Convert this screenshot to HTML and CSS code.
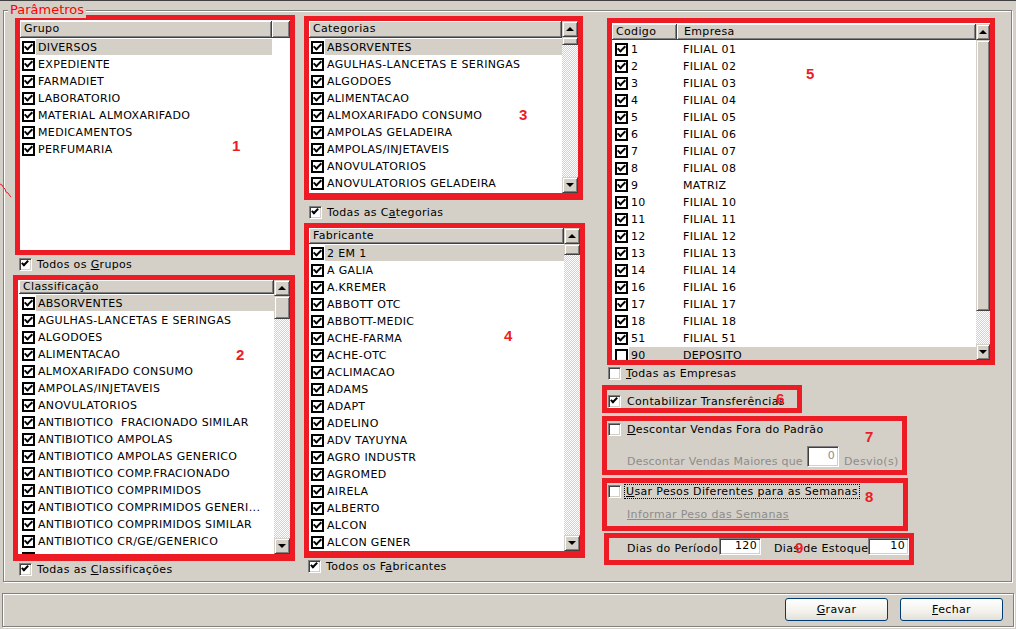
FILE: index.html
```html
<!DOCTYPE html>
<html lang="pt">
<head>
<meta charset="utf-8">
<title>Parâmetros</title>
<link rel="stylesheet" href="styles.css">
</head>
<body>
<div class="window">
  <div class="groupbox">
    <span class="legend">Parâmetros</span>
    <div class="cols">
      <div class="col col1">
        <div class="anno box1">
          <div class="lv">
            <div class="lv-main">
              <div class="lv-head"><div class="hd hd-grupo">Grupo</div><div class="hd fill"></div></div>
              <div class="rows">
                <div class="row sel"><i class="lcb on"></i><span class="txt">DIVERSOS</span></div>
                <div class="row"><i class="lcb on"></i><span class="txt">EXPEDIENTE</span></div>
                <div class="row"><i class="lcb on"></i><span class="txt">FARMADIET</span></div>
                <div class="row"><i class="lcb on"></i><span class="txt">LABORATORIO</span></div>
                <div class="row"><i class="lcb on"></i><span class="txt">MATERIAL ALMOXARIFADO</span></div>
                <div class="row"><i class="lcb on"></i><span class="txt">MEDICAMENTOS</span></div>
                <div class="row"><i class="lcb on"></i><span class="txt">PERFUMARIA</span></div>
              </div>
            </div>
          </div>
        </div>
        <div class="opt opt-grupos"><i class="cb on"></i><span class="lbl">Todos os <u>G</u>rupos</span></div>
        <div class="anno box2">
          <div class="lv">
            <div class="lv-main">
              <div class="lv-head"><div class="hd fill">Classificação</div></div>
              <div class="rows">
                <div class="row sel"><i class="lcb on"></i><span class="txt">ABSORVENTES</span></div>
                <div class="row"><i class="lcb on"></i><span class="txt">AGULHAS-LANCETAS E SERINGAS</span></div>
                <div class="row"><i class="lcb on"></i><span class="txt">ALGODOES</span></div>
                <div class="row"><i class="lcb on"></i><span class="txt">ALIMENTACAO</span></div>
                <div class="row"><i class="lcb on"></i><span class="txt">ALMOXARIFADO CONSUMO</span></div>
                <div class="row"><i class="lcb on"></i><span class="txt">AMPOLAS/INJETAVEIS</span></div>
                <div class="row"><i class="lcb on"></i><span class="txt">ANOVULATORIOS</span></div>
                <div class="row"><i class="lcb on"></i><span class="txt">ANTIBIOTICO  FRACIONADO SIMILAR</span></div>
                <div class="row"><i class="lcb on"></i><span class="txt">ANTIBIOTICO AMPOLAS</span></div>
                <div class="row"><i class="lcb on"></i><span class="txt">ANTIBIOTICO AMPOLAS GENERICO</span></div>
                <div class="row"><i class="lcb on"></i><span class="txt">ANTIBIOTICO COMP.FRACIONADO</span></div>
                <div class="row"><i class="lcb on"></i><span class="txt">ANTIBIOTICO COMPRIMIDOS</span></div>
                <div class="row"><i class="lcb on"></i><span class="txt">ANTIBIOTICO COMPRIMIDOS GENERI...</span></div>
                <div class="row"><i class="lcb on"></i><span class="txt">ANTIBIOTICO COMPRIMIDOS SIMILAR</span></div>
                <div class="row"><i class="lcb on"></i><span class="txt">ANTIBIOTICO CR/GE/GENERICO</span></div>
                <div class="row"><i class="lcb on"></i><span class="txt">ANTIBIOTICO CR/GE/SIMILAR</span></div>
              </div>
            </div>
            <div class="sb">
              <div class="sbb up"></div>
              <div class="thumb th2"></div>
              <div class="track"></div>
              <div class="sbb dn"></div>
            </div>
          </div>
        </div>
        <div class="opt opt-class"><i class="cb on"></i><span class="lbl">Todas as <u>C</u>lassificações</span></div>
      </div>

      <div class="col col2">
        <div class="anno box3">
          <div class="lv">
            <div class="lv-main">
              <div class="lv-head"><div class="hd fill">Categorias</div></div>
              <div class="rows">
                <div class="row sel"><i class="lcb on"></i><span class="txt">ABSORVENTES</span></div>
                <div class="row"><i class="lcb on"></i><span class="txt">AGULHAS-LANCETAS E SERINGAS</span></div>
                <div class="row"><i class="lcb on"></i><span class="txt">ALGODOES</span></div>
                <div class="row"><i class="lcb on"></i><span class="txt">ALIMENTACAO</span></div>
                <div class="row"><i class="lcb on"></i><span class="txt">ALMOXARIFADO CONSUMO</span></div>
                <div class="row"><i class="lcb on"></i><span class="txt">AMPOLAS GELADEIRA</span></div>
                <div class="row"><i class="lcb on"></i><span class="txt">AMPOLAS/INJETAVEIS</span></div>
                <div class="row"><i class="lcb on"></i><span class="txt">ANOVULATORIOS</span></div>
                <div class="row"><i class="lcb on"></i><span class="txt">ANOVULATORIOS GELADEIRA</span></div>
                <div class="row"><i class="lcb on"></i><span class="txt">ANSIOLITICOS</span></div>
              </div>
            </div>
            <div class="sb">
              <div class="sbb up"></div>
              <div class="thumb th3"></div>
              <div class="track"></div>
              <div class="sbb dn"></div>
            </div>
          </div>
        </div>
        <div class="opt opt-cat"><i class="cb on"></i><span class="lbl">Todas as C<u>a</u>tegorias</span></div>
        <div class="anno box4">
          <div class="lv">
            <div class="lv-main">
              <div class="lv-head"><div class="hd fill">Fabricante</div></div>
              <div class="rows">
                <div class="row sel"><i class="lcb on"></i><span class="txt">2 EM 1</span></div>
                <div class="row"><i class="lcb on"></i><span class="txt">A GALIA</span></div>
                <div class="row"><i class="lcb on"></i><span class="txt">A.KREMER</span></div>
                <div class="row"><i class="lcb on"></i><span class="txt">ABBOTT OTC</span></div>
                <div class="row"><i class="lcb on"></i><span class="txt">ABBOTT-MEDIC</span></div>
                <div class="row"><i class="lcb on"></i><span class="txt">ACHE-FARMA</span></div>
                <div class="row"><i class="lcb on"></i><span class="txt">ACHE-OTC</span></div>
                <div class="row"><i class="lcb on"></i><span class="txt">ACLIMACAO</span></div>
                <div class="row"><i class="lcb on"></i><span class="txt">ADAMS</span></div>
                <div class="row"><i class="lcb on"></i><span class="txt">ADAPT</span></div>
                <div class="row"><i class="lcb on"></i><span class="txt">ADELINO</span></div>
                <div class="row"><i class="lcb on"></i><span class="txt">ADV TAYUYNA</span></div>
                <div class="row"><i class="lcb on"></i><span class="txt">AGRO INDUSTR</span></div>
                <div class="row"><i class="lcb on"></i><span class="txt">AGROMED</span></div>
                <div class="row"><i class="lcb on"></i><span class="txt">AIRELA</span></div>
                <div class="row"><i class="lcb on"></i><span class="txt">ALBERTO</span></div>
                <div class="row"><i class="lcb on"></i><span class="txt">ALCON</span></div>
                <div class="row"><i class="lcb on"></i><span class="txt">ALCON GENER</span></div>
                <div class="row"><i class="lcb on"></i><span class="txt">ALERGAN</span></div>
              </div>
            </div>
            <div class="sb">
              <div class="sbb up"></div>
              <div class="thumb th4"></div>
              <div class="track"></div>
              <div class="sbb dn"></div>
            </div>
          </div>
        </div>
        <div class="opt opt-fab"><i class="cb on"></i><span class="lbl">Todos os F<u>a</u>bricantes</span></div>
      </div>

      <div class="col col3">
        <div class="anno box5">
          <div class="lv">
            <div class="lv-main">
              <div class="lv-head"><div class="hd hd-cod">Codigo</div><div class="hd fill hd-emp">Empresa</div></div>
              <div class="rows">
                <div class="row"><i class="lcb on"></i><span class="txt"><span class="code">1</span>FILIAL 01</span></div>
                <div class="row"><i class="lcb on"></i><span class="txt"><span class="code">2</span>FILIAL 02</span></div>
                <div class="row"><i class="lcb on"></i><span class="txt"><span class="code">3</span>FILIAL 03</span></div>
                <div class="row"><i class="lcb on"></i><span class="txt"><span class="code">4</span>FILIAL 04</span></div>
                <div class="row"><i class="lcb on"></i><span class="txt"><span class="code">5</span>FILIAL 05</span></div>
                <div class="row"><i class="lcb on"></i><span class="txt"><span class="code">6</span>FILIAL 06</span></div>
                <div class="row"><i class="lcb on"></i><span class="txt"><span class="code">7</span>FILIAL 07</span></div>
                <div class="row"><i class="lcb on"></i><span class="txt"><span class="code">8</span>FILIAL 08</span></div>
                <div class="row"><i class="lcb on"></i><span class="txt"><span class="code">9</span>MATRIZ</span></div>
                <div class="row"><i class="lcb on"></i><span class="txt"><span class="code">10</span>FILIAL 10</span></div>
                <div class="row"><i class="lcb on"></i><span class="txt"><span class="code">11</span>FILIAL 11</span></div>
                <div class="row"><i class="lcb on"></i><span class="txt"><span class="code">12</span>FILIAL 12</span></div>
                <div class="row"><i class="lcb on"></i><span class="txt"><span class="code">13</span>FILIAL 13</span></div>
                <div class="row"><i class="lcb on"></i><span class="txt"><span class="code">14</span>FILIAL 14</span></div>
                <div class="row"><i class="lcb on"></i><span class="txt"><span class="code">16</span>FILIAL 16</span></div>
                <div class="row"><i class="lcb on"></i><span class="txt"><span class="code">17</span>FILIAL 17</span></div>
                <div class="row"><i class="lcb on"></i><span class="txt"><span class="code">18</span>FILIAL 18</span></div>
                <div class="row"><i class="lcb on"></i><span class="txt"><span class="code">51</span>FILIAL 51</span></div>
                <div class="row sel"><i class="lcb"></i><span class="txt"><span class="code">90</span>DEPOSITO</span></div>
              </div>
            </div>
            <div class="sb sb5">
              <div class="sbb up"></div>
              <div class="thumb th5"></div>
              <div class="track"></div>
              <div class="sbb dn"></div>
            </div>
          </div>
        </div>
        <div class="opt opt-emp"><i class="cb"></i><span class="lbl"><u>T</u>odas as Empresas</span></div>

        <div class="anno box6">
          <div class="opt"><i class="cb on"></i><span class="lbl lbl6">Contabilizar Transferências</span></div>
        </div>

        <div class="anno box7">
          <div class="opt"><i class="cb"></i><span class="lbl lbl6"><u>D</u>escontar Vendas Fora do Padrão</span></div>
          <div class="line2">
            <span class="dis w-desc">Descontar Vendas Maiores que</span>
            <span class="inp inp0 dis">0</span>
            <span class="dis desvio">Desvio(s)</span>
          </div>
        </div>

        <div class="anno box8">
          <div class="opt"><i class="cb"></i><span class="lbl focus"><u>U</u>sar Pesos Diferentes para as Semanas</span></div>
          <div class="line3"><span class="dis link">Informar Peso das Semanas</span></div>
        </div>

        <div class="anno box9">
          <span class="w-dias1">Dias do Período</span>
          <span class="inp inp-d1">120</span>
          <span class="w-dias2">Dias de Estoque</span>
          <span class="inp inp-d2">10</span>
        </div>
      </div>
    </div>
  </div>

  <div class="bottombar">
    <button class="btn"><u>G</u>ravar</button>
    <button class="btn"><u>F</u>echar</button>
  </div>
</div>

<div class="mark m1">1</div>
<div class="mark m2">2</div>
<div class="mark m3">3</div>
<div class="mark m4">4</div>
<div class="mark m5">5</div>
<div class="mark m6">6</div>
<div class="mark m7">7</div>
<div class="mark m8">8</div>
<div class="mark m9">9</div>
<svg class="squiggle" width="12" height="16" viewBox="0 0 12 16"><polyline points="0,1 2,2 3,4 5,6 6,9 8,10 10,13 11,14" fill="none" stroke="#ED1C24" stroke-width="1"/></svg>
</body>
</html>
```

FILE: styles.css
```css
* { box-sizing: border-box; }
html, body { margin: 0; padding: 0; }
body {
  width: 1016px;
  height: 629px;
  overflow: hidden;
  position: relative;
  background: #D4D0C8;
  font-family: "DejaVu Sans", "Liberation Sans", sans-serif;
  font-size: 11px;
  letter-spacing: 0.35px;
  color: #000;
}
u { text-decoration: underline; text-underline-offset: 1px; }

.window { border-top: 1px solid #404040; height: 629px; }

.groupbox {
  position: relative;
  margin: 9px 4px 0 3px;
  height: 572px;
  border: 1px solid #808080;
  box-shadow: inset 1px 1px #fff, 1px 1px #fff;
}
.legend {
  position: absolute;
  left: 4px;
  top: -9px;
  padding: 0 2px;
  background: #D4D0C8;
  color: #ff0000;
  font-size: 13px;
  line-height: 16px;
  letter-spacing: 0;
}

.cols { display: flex; align-items: flex-start; }
.col { display: flex; flex-direction: column; align-items: flex-start; }
.col1 { margin-left: 9px; width: 282px; }
.col2 { margin-left: 9px; width: 281px; }
.col3 { margin-left: 17px; width: 394px; }

.anno { border: 5px solid #ED1C24; overflow: hidden; flex: none; }

.box1 { margin: 4px 0 0 2px; width: 280px; height: 240px; }
.box2 { margin-top: 4px; width: 282px; height: 286px; border-bottom-width: 7px; }
.box3 { margin-top: 5px; width: 279px; height: 184px; border-bottom-width: 7px; }
.box4 { margin-top: 4px; width: 281px; height: 335px; border-bottom-width: 7px; }
.box5 { margin: 7px 0 0 5px; width: 388px; height: 347px; }
.box6 { margin-top: 5px; width: 200px; height: 28px; padding: 5px 0 0 1px; }
.box7 { margin-top: 3px; width: 305px; height: 59px; padding: 2px 0 0 1px; }
.box8 { margin-top: 3px; width: 306px; height: 53px; padding: 2px 0 0 1px; }
.box9 { margin: 2px 0 0 2px; width: 310px; height: 32px; display: flex; align-items: flex-start; padding-left: 18px; }

/* list view */
.lv { display: flex; background: #fff; height: 100%; }
.box1 .lv, .box5 .lv { padding-top: 1px; }
.box2 .lv { padding-left: 1px; }
.lv-main { flex: 1; display: flex; flex-direction: column; min-width: 0; }
.lv-head { display: flex; height: 16px; flex: none; }
.box1 .lv-head, .box3 .lv-head { height: 17px; }
.box2 .lv-head { height: 14px; }
.hd {
  height: 100%;
  background: #D4D0C8;
  border-right: 1px solid #404040;
  border-bottom: 1px solid #404040;
  box-shadow: inset 1px 1px #fff, inset -1px -1px #808080;
  padding-left: 4px;
  line-height: 15px;
  white-space: nowrap;
}
.box2 .hd { line-height: 14px; }
.hd.fill { flex: 1; }
.hd-grupo { width: 252px; }
.hd-cod { width: 65px; }
.hd-emp { padding-left: 7px; }

.rows { flex: 1; overflow: hidden; }
.row { display: flex; align-items: flex-start; height: 17px; padding-left: 2px; }
.box1 .row { width: 252px; }
.box2 .row { padding-left: 3px; }
.box5 .row { padding-left: 3px; }
.lcb {
  flex: none;
  width: 13px;
  height: 13px;
  margin-top: 3px;
  border: 2px solid #000;
  background: #fff;
  position: relative;
}
.lcb.on::after {
  content: "";
  position: absolute;
  left: 2px;
  top: -1px;
  width: 3px;
  height: 6px;
  border: solid #000;
  border-width: 0 2px 2px 0;
  transform: rotate(45deg);
}
.txt {
  flex: 1;
  margin: 1px 0 0 1px;
  padding-left: 2px;
  height: 16px;
  line-height: 17px;
  white-space: pre;
  overflow: hidden;
}
.sel .txt { background: #D4D0C8; }
.code { display: inline-block; width: 52px; }

/* scrollbar */
.sb { flex: none; width: 16px; display: flex; flex-direction: column; }
.sb5 { width: 14px; }
.sbb, .thumb {
  flex: none;
  background: #D4D0C8;
  border: 1px solid;
  border-color: #D4D0C8 #404040 #404040 #D4D0C8;
  box-shadow: inset 1px 1px #fff, inset -1px -1px #808080;
}
.sbb { height: 16px; display: flex; align-items: center; justify-content: center; }
.sbb.up::before {
  content: "";
  border-left: 4px solid transparent;
  border-right: 4px solid transparent;
  border-bottom: 4px solid #000;
}
.sbb.dn::before {
  content: "";
  border-left: 4px solid transparent;
  border-right: 4px solid transparent;
  border-top: 4px solid #000;
}
.th2 { height: 23px; }
.th3 { height: 8px; }
.th4 { height: 11px; }
.th5 { height: 271px; }
.track {
  flex: 1;
  background: repeating-conic-gradient(#fff 0 25%, #D4D0C8 0 50%) 0 0 / 2px 2px;
}

/* checkboxes with labels */
.opt { display: flex; align-items: center; height: 13px; flex: none; }
.opt-grupos { margin: 3px 0 0 6px; }
.opt-class { margin: 2px 0 0 6px; }
.opt-cat { margin: 6px 0 0 5px; }
.opt-fab { margin: 2px 0 0 4px; }
.opt-emp { margin: 2px 0 0 6px; }
.lbl { margin-left: 5px; white-space: nowrap; }
.lbl6 { margin-left: 6px; }
.cb {
  flex: none;
  width: 13px;
  height: 13px;
  border: 1px solid;
  border-color: #808080 #fff #fff #808080;
  box-shadow: inset 1px 1px #404040, inset -1px -1px #D4D0C8;
  background: #fff;
  position: relative;
}
.cb.on::after {
  content: "";
  position: absolute;
  left: 3px;
  top: 0;
  width: 2px;
  height: 5px;
  border: solid #000;
  border-width: 0 2px 2px 0;
  transform: rotate(45deg);
}
.focus { margin-left: 4px; padding: 0 1px; outline: 1px dotted #000; outline-offset: 0; line-height: 13px; }

.dis { color: #8c8c8c; }
.line2 { display: flex; align-items: flex-end; margin-top: 10px; padding-left: 19px; height: 21px; }
.w-desc { width: 180px; white-space: nowrap; line-height: 13px; margin-bottom: -1px; letter-spacing: 0.2px; }
.desvio { margin-left: 5px; line-height: 13px; margin-bottom: -1px; white-space: nowrap; }
.line3 { margin-top: 10px; padding-left: 19px; line-height: 13px; }
.link { text-decoration: underline; }

.inp {
  display: block;
  flex: none;
  background: #fff;
  border: 1px solid;
  border-color: #808080 #fff #fff #808080;
  box-shadow: inset 1px 1px #404040, inset -1px -1px #D4D0C8;
  text-align: right;
  padding-right: 3px;
}
.inp0 { width: 32px; height: 21px; line-height: 17px; color: #8c8c8c; }
.inp-d1 { width: 42px; height: 17px; line-height: 13px; }
.inp-d2 { width: 41px; height: 17px; line-height: 13px; }
.w-dias1 { width: 92px; margin-top: 4px; line-height: 13px; white-space: nowrap; }
.w-dias2 { width: 94px; margin: 4px 0 0 13px; line-height: 13px; white-space: nowrap; }

/* bottom bar */
.bottombar {
  margin: 11px 2px 0 2px;
  height: 34px;
  border: 1px solid #808080;
  box-shadow: inset 1px 1px #fff, 1px 1px #fff;
  display: flex;
  justify-content: flex-end;
  align-items: flex-start;
  gap: 12px;
  padding: 4px 10px 0 0;
}
.btn {
  width: 103px;
  height: 23px;
  border: 1px solid #003C74;
  border-radius: 3px;
  background: linear-gradient(#ffffff, #f2f1ec 60%, #e3e0d6);
  font-family: "DejaVu Sans", "Liberation Sans", sans-serif;
  font-size: 11px;
  letter-spacing: 0.35px;
  color: #000;
  padding: 0;
}

/* annotation numbers */
.mark {
  position: absolute;
  color: #ED1C24;
  font: bold 15px/15px "Liberation Sans", Arial, sans-serif;
  letter-spacing: 0;
}
.m1 { left: 232px; top: 138px; }
.m2 { left: 236px; top: 347px; }
.m3 { left: 519px; top: 107px; }
.m4 { left: 504px; top: 328px; }
.m5 { left: 806px; top: 66px; }
.m6 { left: 776px; top: 391px; }
.m7 { left: 865px; top: 429px; }
.m8 { left: 865px; top: 489px; }
.m9 { left: 795px; top: 540px; }
.squiggle { position: absolute; left: 0; top: 183px; }
```
